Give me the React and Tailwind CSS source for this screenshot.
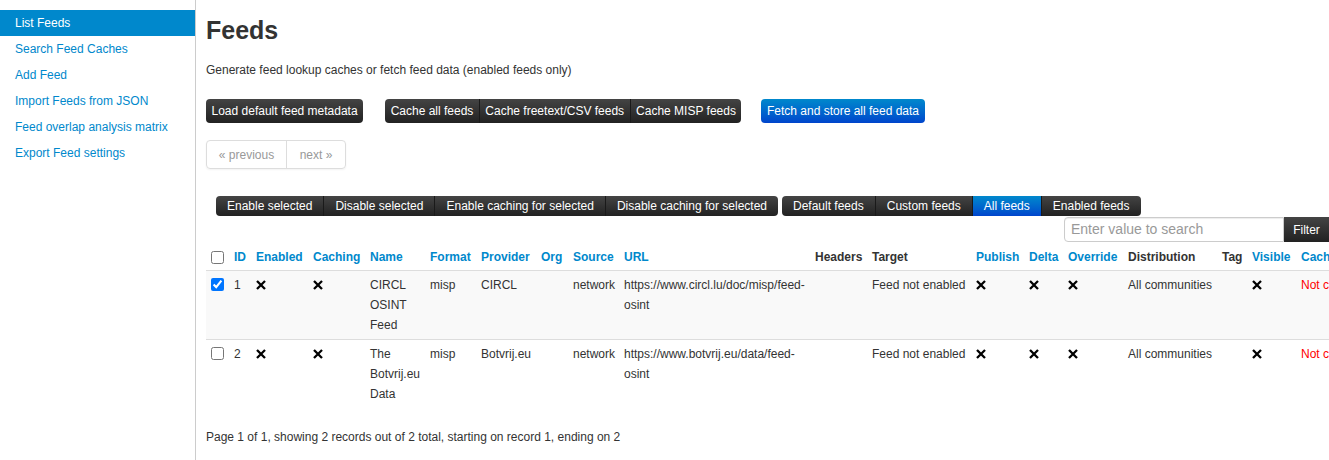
import React from "react";

const SIDE = [
  "List Feeds",
  "Search Feed Caches",
  "Add Feed",
  "Import Feeds from JSON",
  "Feed overlap analysis matrix",
  "Export Feed settings",
];

const COLS = [
  { label: "", w: "w-[23px]" },
  { label: "ID", w: "w-[22px]", link: true },
  { label: "Enabled", w: "w-[57px]", link: true },
  { label: "Caching", w: "w-[57px]", link: true },
  { label: "Name", w: "w-[60px]", link: true },
  { label: "Format", w: "w-[51px]", link: true },
  { label: "Provider", w: "w-[60px]", link: true },
  { label: "Org", w: "w-[32px]", link: true },
  { label: "Source", w: "w-[51px]", link: true },
  { label: "URL", w: "w-[191px]", link: true },
  { label: "Headers", w: "w-[57px]" },
  { label: "Target", w: "w-[104px]" },
  { label: "Publish", w: "w-[53px]", link: true },
  { label: "Delta", w: "w-[39px]", link: true },
  { label: "Override", w: "w-[60px]", link: true },
  { label: "Distribution", w: "w-[94px]" },
  { label: "Tag", w: "w-[30px]" },
  { label: "Visible", w: "w-[49px]", link: true },
  { label: "Caching", w: "w-[90px]", link: true },
];

const ROWS = [
  {
    id: 1,
    checked: true,
    name: "CIRCL OSINT Feed",
    provider: "CIRCL",
    url: "https://www.circl.lu/doc/misp/feed-osint",
  },
  {
    id: 2,
    checked: false,
    name: "The Botvrij.eu Data",
    provider: "Botvrij.eu",
    url: "https://www.botvrij.eu/data/feed-osint",
  },
];

function Cross() {
  return (
    <svg width="10" height="10" viewBox="0 0 10 10" className="inline-block align-[-1px]">
      <path d="M1.8 1.8 L8.2 8.2 M8.2 1.8 L1.8 8.2" stroke="#000" strokeWidth="2.3" strokeLinecap="square" />
    </svg>
  );
}

function Btn({ children, primary }) {
  return (
    <span
      className={`inline-flex items-center h-[24px] px-[5.5px] text-white text-[12px] border-r border-[#1a1a1a] last:border-r-0 ${
        primary ? "bg-linear-to-b from-[#0088cc] to-[#0044cc]" : "bg-linear-to-b from-[#444] to-[#222]"
      }`}
    >
      {children}
    </span>
  );
}

function ToolBtn({ children, active }) {
  return (
    <span
      className={`inline-flex items-center h-[20px] px-[11px] text-white text-[12px] border-r border-[#1a1a1a] last:border-r-0 ${
        active ? "bg-linear-to-b from-[#0088cc] to-[#0044cc]" : "bg-linear-to-b from-[#444] to-[#222]"
      }`}
    >
      {children}
    </span>
  );
}

export default function App() {
  return (
    <div className="flex h-[460px] w-[1329px] overflow-hidden bg-white text-[#333] text-[12px] font-['Liberation_Sans',Arial,sans-serif]">
      <aside className="w-[196px] shrink-0 border-r border-[#ccc] pt-[10px]">
        {SIDE.map((s, i) => (
          <div
            key={s}
            className={`h-[26px] leading-[26px] pl-[15px] ${
              i === 0 ? "bg-[#0088cc] text-white" : "text-[#0088cc]"
            }`}
          >
            {s}
          </div>
        ))}
      </aside>

      <main className="flex-1 min-w-0 overflow-hidden pl-[10px]">
        <h2 className="text-[25px] font-bold leading-[30px] mt-[15px] text-[#333]">Feeds</h2>
        <p className="mt-[18px] leading-[14px]">
          Generate feed lookup caches or fetch feed data (enabled feeds only)
        </p>

        <div className="mt-[22px] flex items-center">
          <div className="flex rounded-[4px] overflow-hidden">
            <Btn>Load default feed metadata</Btn>
          </div>
          <div className="ml-[22px] flex rounded-[4px] overflow-hidden">
            <Btn>Cache all feeds</Btn>
            <Btn>Cache freetext/CSV feeds</Btn>
            <Btn>Cache MISP feeds</Btn>
          </div>
          <div className="ml-[20px] flex rounded-[4px] overflow-hidden">
            <Btn primary>Fetch and store all feed data</Btn>
          </div>
        </div>

        <div className="mt-[17px] flex w-fit h-[29px] border border-[#ddd] rounded-[4px] text-[#999] text-[12px] shadow-[0_1px_2px_rgba(0,0,0,0.05)]">
          <span className="flex items-center w-[80px] justify-center border-r border-[#ddd]">« previous</span>
          <span className="flex items-center w-[58px] justify-center">next »</span>
        </div>

        <div className="mt-[27px] ml-[10px] flex">
          <div className="flex rounded-[4px] overflow-hidden">
            <ToolBtn>Enable selected</ToolBtn>
            <ToolBtn>Disable selected</ToolBtn>
            <ToolBtn>Enable caching for selected</ToolBtn>
            <ToolBtn>Disable caching for selected</ToolBtn>
          </div>
          <div className="ml-[4px] flex rounded-[4px] overflow-hidden">
            <ToolBtn>Default feeds</ToolBtn>
            <ToolBtn>Custom feeds</ToolBtn>
            <ToolBtn active>All feeds</ToolBtn>
            <ToolBtn>Enabled feeds</ToolBtn>
          </div>
        </div>

        <div className="mt-[1px] flex justify-end">
          <div className="flex h-[25px]">
            <div className="w-[220px] border border-[#ccc] rounded-l-[4px] px-[6px] flex items-center text-[14px] text-[#999] shadow-[inset_0_1px_1px_rgba(0,0,0,0.075)]">
              Enter value to search
            </div>
            <div className="w-[45px] bg-linear-to-b from-[#444] to-[#222] text-white flex items-center justify-center text-[12px]">
              Filter
            </div>
          </div>
        </div>

        <table className="table-fixed border-collapse w-[1180px] mt-[1px]">
          <colgroup>
            {COLS.map((c, i) => (
              <col key={i} className={c.w} />
            ))}
          </colgroup>
          <thead>
            <tr>
              {COLS.map((c, i) => (
                <th
                  key={i}
                  className={`text-left align-bottom px-[5px] pt-[4px] pb-[3px] leading-[20px] font-bold whitespace-nowrap ${
                    c.link ? "text-[#0088cc]" : "text-[#333]"
                  }`}
                >
                  {i === 0 ? (
                    <input type="checkbox" className="w-[13px] h-[13px] align-[-3px]" readOnly />
                  ) : (
                    c.label
                  )}
                </th>
              ))}
            </tr>
          </thead>
          <tbody>
            {ROWS.map((r, idx) => (
              <tr key={r.id} className={idx === 0 ? "bg-[#f9f9f9]" : ""}>
                {[
                  <input
                    type="checkbox"
                    className="w-[13px] h-[13px] align-[-2px]"
                    defaultChecked={r.checked}
                  />,
                  r.id,
                  <Cross />,
                  <Cross />,
                  r.name,
                  "misp",
                  <span className="whitespace-nowrap">{r.provider}</span>,
                  "",
                  <span className="whitespace-nowrap">network</span>,
                  r.url,
                  "",
                  <span className="whitespace-nowrap">Feed not enabled</span>,
                  <Cross />,
                  <Cross />,
                  <Cross />,
                  <span className="whitespace-nowrap">All communities</span>,
                  "",
                  <Cross />,
                  <span className="text-[#ff0000] whitespace-nowrap">Not cached</span>,
                ].map((cell, i) => (
                  <td
                    key={i}
                    className="align-top px-[5px] py-[4px] leading-[20px] border-t border-[#ddd]"
                  >
                    {cell}
                  </td>
                ))}
              </tr>
            ))}
          </tbody>
        </table>

        <p className="mt-[22px] leading-[14px]">
          Page 1 of 1, showing 2 records out of 2 total, starting on record 1, ending on 2
        </p>
      </main>
    </div>
  );
}
